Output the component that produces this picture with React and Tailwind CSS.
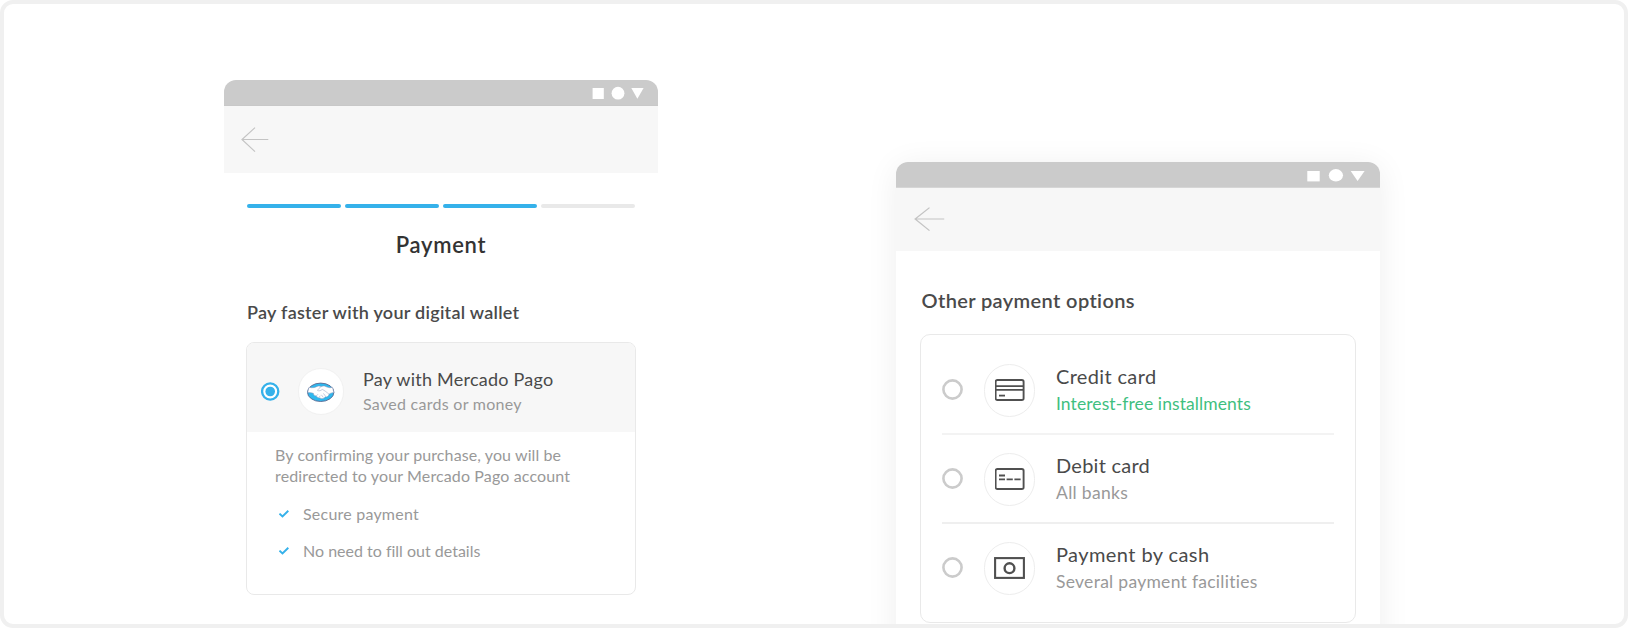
function BackArrow({ className }) {
  return (
    <svg className={className} viewBox="0 0 28 26" preserveAspectRatio="none" fill="none" stroke="#c4c4c4" strokeWidth="1.2">
      <path d="M14 0.6 L1 12.5 L14 24.6 M1 12.5 H27.3" />
    </svg>
  );
}

function MercadoPagoLogo() {
  return (
    <svg className="h-5 w-7" viewBox="0 0 28 20" fill="none">
      <ellipse cx="13.7" cy="10.3" rx="13.2" ry="9.2" fill="#2fb8ee" stroke="#5a6690" strokeWidth="0.9" />
      <path d="M2 5.2 C5 6.4 8 5.4 10.2 4.4 C12 3.9 13 4.1 14.2 4.6 C15.6 3.9 17 3.8 18.6 4.5 C21 5.6 23 6.2 25.4 5.2 L26.8 10.4 C24.8 10.7 23.2 11.2 22.2 12.1 C21.6 14.4 19.8 15.2 18.4 14.8 C17 16.8 14.4 17.2 12.9 15.9 C10.8 15.9 9.6 14.8 9.3 13.9 C7.4 13.9 6.2 12.5 6.5 11.4 C5 10.8 3.2 10.6 0.7 10.6 Z" fill="#fff" stroke="#8a93b5" strokeWidth="0.5" />
      <path d="M14.2 4.6 C12.6 5.6 11.2 7 10.6 8.5 C12.2 9.4 14 8.5 15.2 7.4 C17.4 8.4 19.8 10.2 22 12.2 M16.4 11.4 L18.6 14.3 M14.4 12.8 L16.2 15.3 M9.3 13.9 L11 12.2 M12.2 15.2 L13.2 13.7" stroke="#8f98ba" strokeWidth="0.5" />
    </svg>
  );
}

function Check() {
  return (
    <svg className="h-2 w-2.5" viewBox="0 0 10 8" fill="none" stroke="#35b1ea" strokeWidth="1.9">
      <path d="M0.5 3.6 L3.5 6.5 L9.3 0.8" />
    </svg>
  );
}

function Radio({ checked }) {
  return checked ? (
    <svg className="h-[19px] w-[19px]" viewBox="0 0 19 19" fill="#fff" stroke="#35b1ea" strokeWidth="2.3">
      <circle cx="9.2" cy="9.5" r="8.1" />
      <circle cx="9.2" cy="9.5" r="4.8" fill="#35b1ea" stroke="none" />
    </svg>
  ) : (
    <svg className="h-[21px] w-[21px]" viewBox="0 0 21 21" fill="#fff" stroke="#cbcbcb" strokeWidth="2.6">
      <circle cx="10.5" cy="10.5" r="9.1" />
    </svg>
  );
}

function CreditCardIcon() {
  return (
    <svg className="h-[22px] w-[30px]" viewBox="0.4 0 30 22" fill="none" stroke="#505050" strokeWidth="1.9">
      <rect x="1" y="1" width="28" height="20" rx="1.8" />
      <path d="M1 7.2 H29 M1 10.8 H29" strokeWidth="1.7" />
      <path d="M4.4 16.6 H10.4" strokeWidth="1.8" />
    </svg>
  );
}

function DebitCardIcon() {
  return (
    <svg className="h-[22px] w-[30px]" viewBox="0.4 0 30 22" fill="none" stroke="#505050" strokeWidth="1.9">
      <rect x="1" y="1" width="28" height="20" rx="1.8" />
      <path d="M4.4 7.5 H10.4 M4.4 11.4 H10.4 M12 11.4 H18.2 M19.8 11.4 H26" strokeWidth="1.8" />
    </svg>
  );
}

function CashIcon() {
  return (
    <svg className="h-[22px] w-[31px]" viewBox="0 0 31 22" fill="none" stroke="#505050" strokeWidth="2.1">
      <rect x="1.1" y="1.1" width="28.8" height="19.8" />
      <circle cx="15.5" cy="11.2" r="4.9" strokeWidth="2.4" />
    </svg>
  );
}

const options = [
  { title: "Credit card", note: "Interest-free installments", Icon: CreditCardIcon, titleClass: "tracking-[0.35px]", noteClass: "tracking-[0.09px] text-[#3fbf7f]", line: "border-[#f3f3f3]" },
  { title: "Debit card", note: "All banks", Icon: DebitCardIcon, titleClass: "tracking-[0.25px]", noteClass: "tracking-[0.33px] text-[#999]", line: "border-[#efefef]" },
  { title: "Payment by cash", note: "Several payment facilities", Icon: CashIcon, titleClass: "tracking-[0.42px]", noteClass: "tracking-[0.28px] text-[#999]", line: "border-transparent" },
];

function WalletPhone() {
  return (
    <section className="mt-[76px] ml-[220px] w-[434px] shrink-0">
      <div className="flex h-[26px] justify-end rounded-t-[12px] border-b border-[#c8c8c8] bg-[#cbcbcb] pr-[14px]">
        <svg className="h-[25px] w-[52px]" viewBox="0 0 52 25" fill="#fff">
          <rect x="0.6" y="8" width="11.2" height="11" />
          <circle cx="26" cy="13.2" r="6.4" />
          <path d="M39.3 8 H51.6 L45.4 18.8 Z" />
        </svg>
      </div>
      <div className="flex h-[67px] items-center bg-[#f7f7f7] pl-[17px]">
        <BackArrow className="h-[26px] w-7" />
      </div>
      <div className="px-[23px] pt-[31px]">
        <div className="grid grid-cols-4 gap-1">
          <span className="h-1 rounded-full bg-[#35b1ea]" />
          <span className="h-1 rounded-full bg-[#35b1ea]" />
          <span className="h-1 rounded-full bg-[#35b1ea]" />
          <span className="h-1 rounded-full bg-[#e9e9e9]" />
        </div>
        <h1 className="mt-[22px] text-center text-[22px] leading-[30px] font-semibold tracking-[0.7px] text-[#333]">Payment</h1>
        <h2 className="mt-10 text-[18px] leading-6 font-semibold tracking-[0.27px] whitespace-nowrap text-[#4a4a4a]">Pay faster with your digital wallet</h2>
      </div>
      <div className="mt-[18px] ml-[22px] h-[253px] w-[390px] overflow-hidden rounded-lg border border-[#e9e9e9]">
        <div className="flex h-[89px] items-center bg-[#f7f7f7] pt-2 pl-[14px]">
          <Radio checked />
          <span className="ml-[18px] flex h-[47px] w-[46px] items-center justify-center rounded-full border border-[#f1f1f1] bg-white">
            <MercadoPagoLogo />
          </span>
          <div className="ml-[19px] whitespace-nowrap">
            <p className="text-[18px] leading-[26px] tracking-[0.24px] text-[#4a4a4a]">Pay with Mercado Pago</p>
            <p className="-mt-px mb-px text-[16px] leading-[25px] tracking-[0.28px] text-[#999]">Saved cards or money</p>
          </div>
        </div>
        <div className="pt-3 pl-7 text-[16px] leading-[21px] whitespace-nowrap text-[#999]">
          <p className="tracking-[0.1px]">By confirming your purchase, you will be</p>
          <p className="tracking-[0.13px]">redirected to your Mercado Pago account</p>
          <div className="mt-[17px] flex items-center gap-[14px] pl-1">
            <Check />
            <span className="tracking-[0.22px]">Secure payment</span>
          </div>
          <div className="mt-4 flex items-center gap-[14px] pl-1">
            <Check />
            <span>No need to fill out details</span>
          </div>
        </div>
      </div>
    </section>
  );
}

function OptionsPhone() {
  return (
    <section className="mt-[158px] ml-[238px] h-[520px] w-[484px] shrink-0 rounded-t-[12px] bg-white shadow-[0_4px_32px_rgba(0,0,0,0.07)]">
      <div className="flex h-[26px] justify-end rounded-t-[12px] border-b border-[#d6d6d6] bg-[#cbcbcb] pr-[15px]">
        <svg className="h-[25px] w-[59px]" viewBox="0 0 59 25" fill="#fff">
          <rect x="1.3" y="9" width="12.4" height="10.4" />
          <ellipse cx="29.9" cy="13.3" rx="7.1" ry="6.2" />
          <path d="M44.7 9 H58.6 L51.6 19 Z" />
        </svg>
      </div>
      <div className="flex h-[63px] items-center bg-[#f7f7f7] pl-[18px]">
        <BackArrow className="h-[25px] w-[31px]" />
      </div>
      <div className="px-6 pt-[35px]">
        <h2 className="pl-[1.5px] text-[20px] leading-7 font-semibold tracking-[0.38px] whitespace-nowrap text-[#4a4a4a]">Other payment options</h2>
        <div className="mt-5 h-[289px] rounded-[10px] border border-[#e9e9e9] pt-[11px] pr-[21px] pl-[21px]">
          {options.map(({ title, note, Icon, titleClass, noteClass, line }) => (
            <div key={title} className={`flex h-[89px] items-center border-b-2 ${line}`}>
              <Radio />
              <span className="mt-px ml-[21px] flex h-[53px] w-[51px] items-center justify-center rounded-full border border-[#ededed]">
                <Icon />
              </span>
              <div className="ml-[21px] whitespace-nowrap">
                <p className={`text-[20px] leading-7 text-[#4a4a4a] ${titleClass}`}>{title}</p>
                <p className={`text-[17.5px] leading-[27px] ${noteClass}`}>{note}</p>
              </div>
            </div>
          ))}
        </div>
      </div>
    </section>
  );
}

export default function App() {
  return (
    <main className="flex h-[628px] w-[1628px] items-start overflow-hidden rounded-[13px] border-4 border-[#f0f0f0] bg-white font-[Lato,sans-serif] [font-variant-ligatures:none]">
      <WalletPhone />
      <OptionsPhone />
    </main>
  );
}
